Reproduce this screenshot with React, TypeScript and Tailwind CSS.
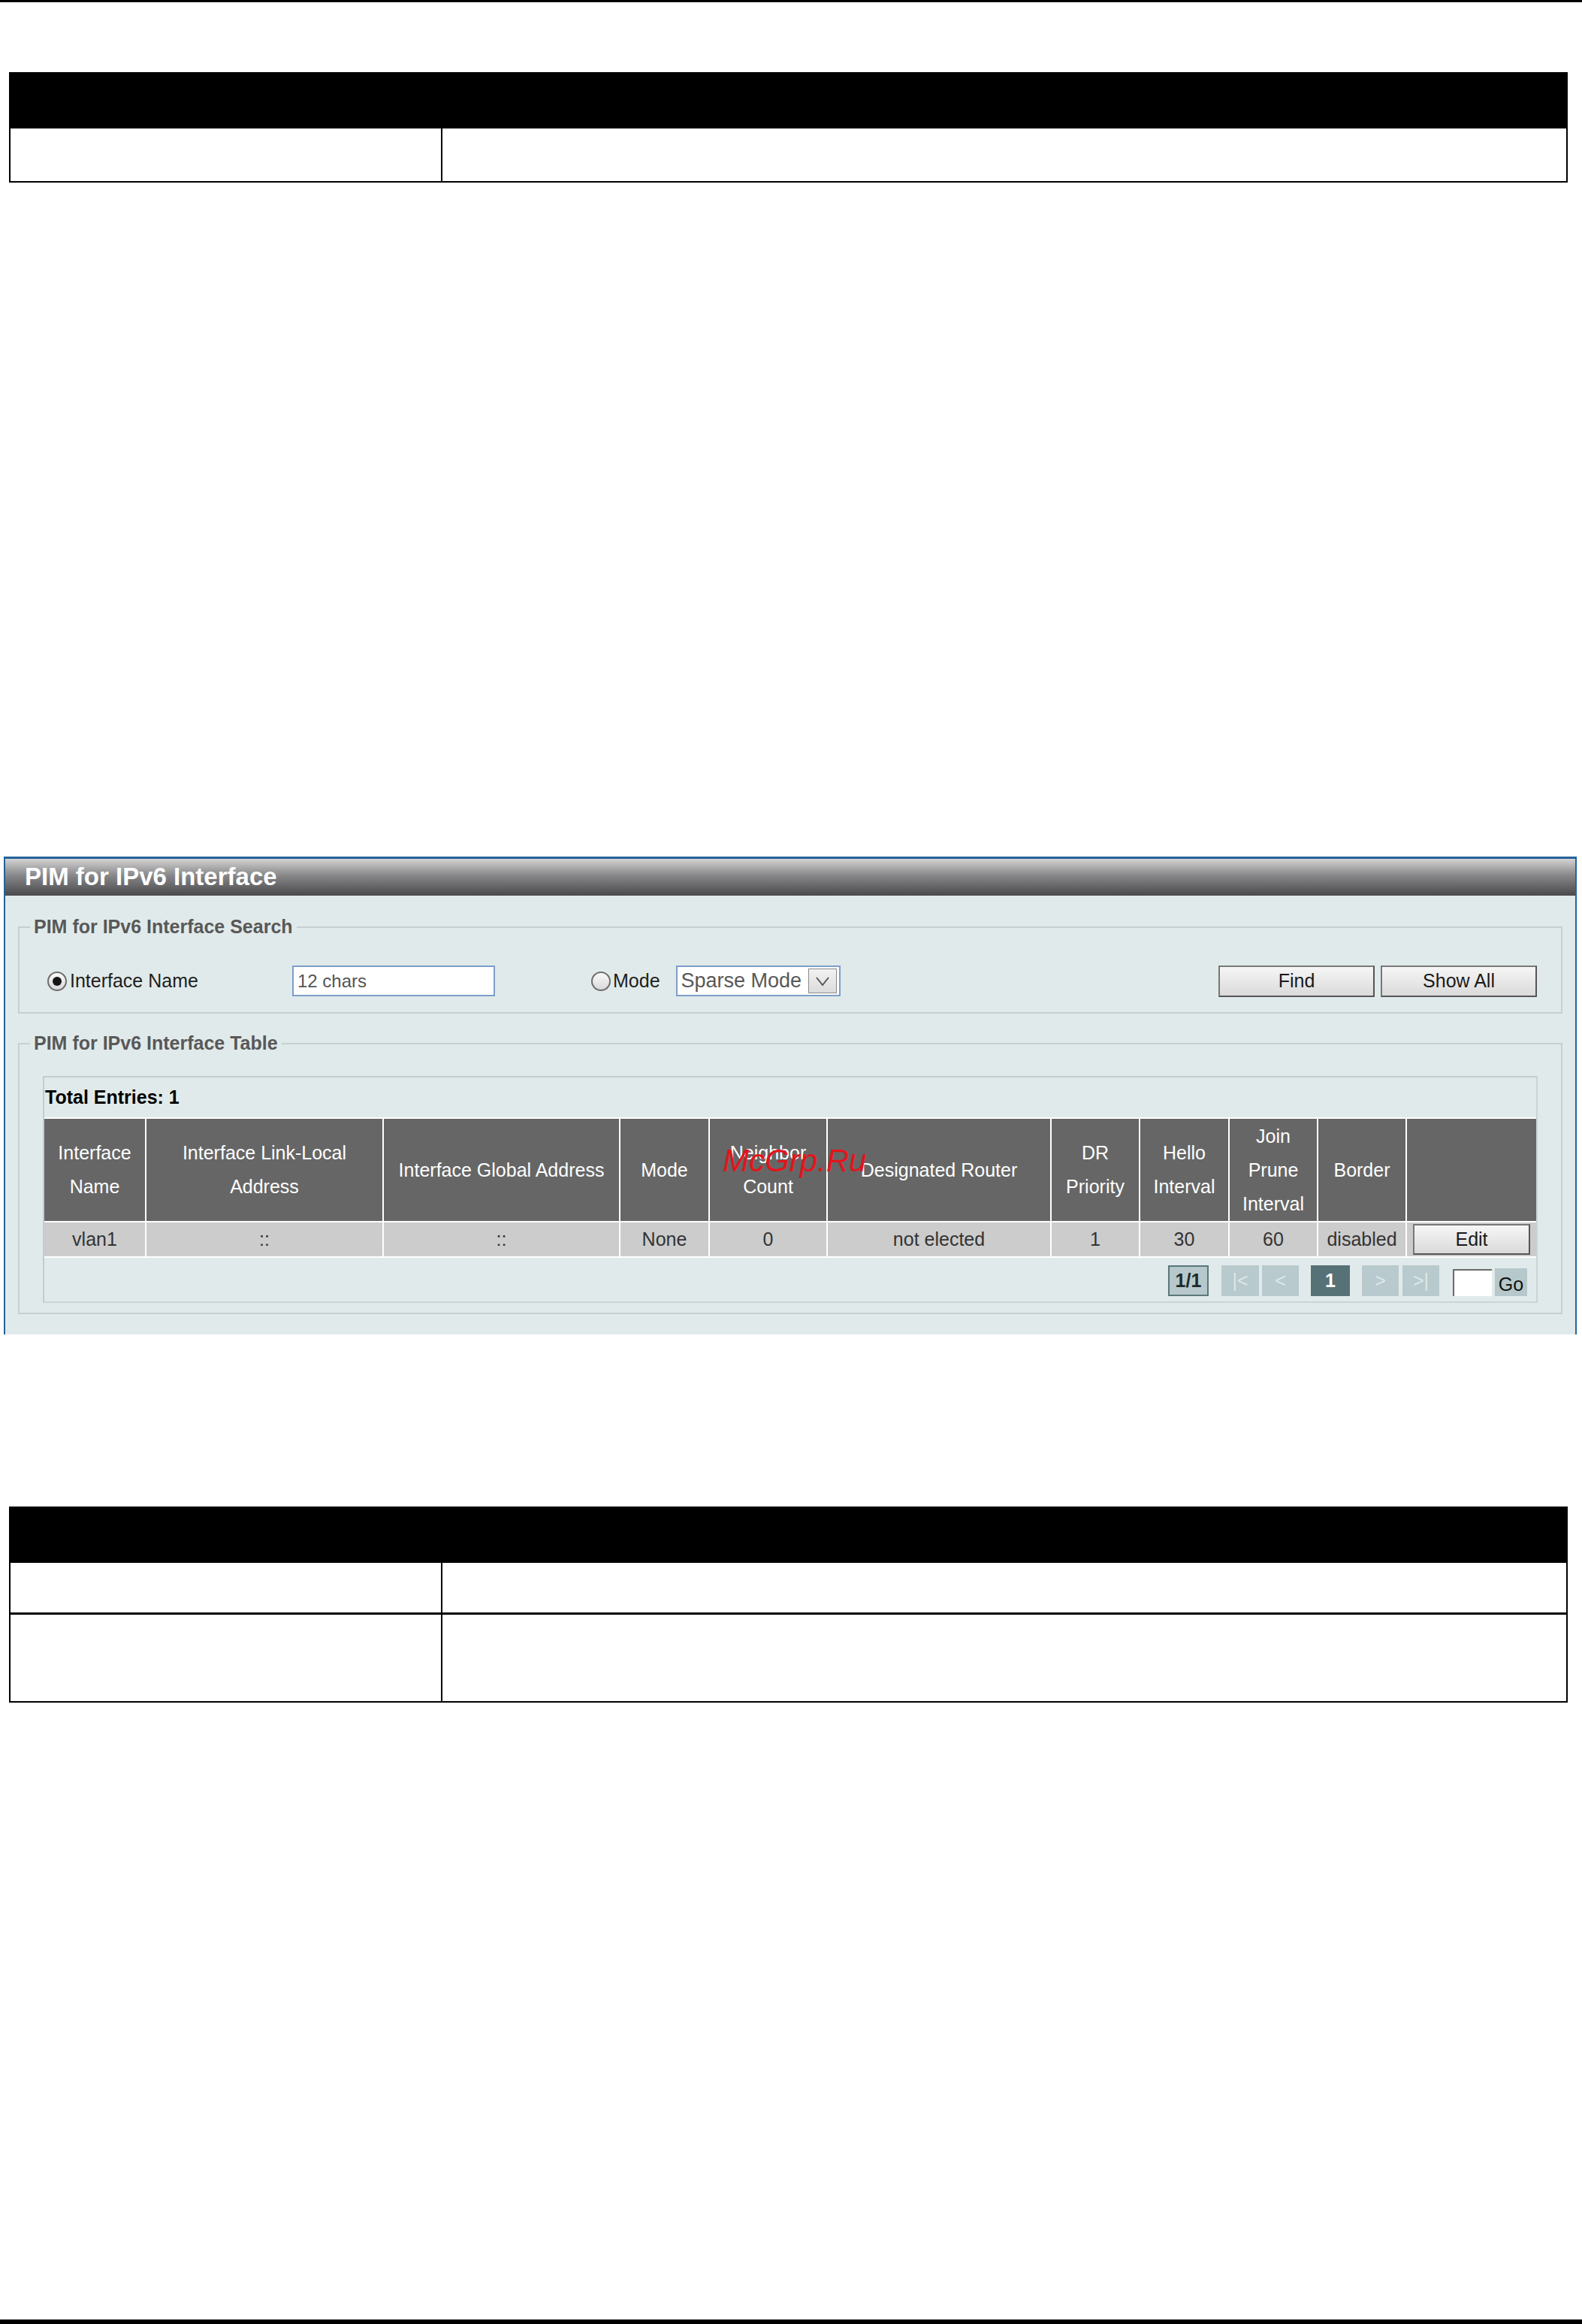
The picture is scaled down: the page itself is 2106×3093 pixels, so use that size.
const font = "font-['Liberation_Sans',Arial,sans-serif]";

function Radio({ checked }: { checked?: boolean }) {
  return (
    <span className="flex h-[26px] w-[26px] shrink-0 items-center justify-center rounded-full border-2 border-[#6e6e6e] bg-linear-to-b from-[#fafafa] to-[#d9d9d9]">
      {checked && <span className="h-[12px] w-[12px] rounded-full bg-[#151515]" />}
    </span>
  );
}

function Button({ label, className }: { label: string; className: string }) {
  return (
    <div
      className={`flex items-center justify-center border-2 border-[#777] border-b-[#555] border-r-[#555] bg-linear-to-b from-[#f6f6f6] to-[#dadada] text-[25px] leading-none text-[#1a1a1a] ${className}`}
    >
      {label}
    </div>
  );
}

const headers: string[][] = [
  ["Interface", "Name"],
  ["Interface Link-Local", "Address"],
  ["Interface Global Address"],
  ["Mode"],
  ["Neighbor", "Count"],
  ["Designated Router"],
  ["DR", "Priority"],
  ["Hello", "Interval"],
  ["Join", "Prune", "Interval"],
  ["Border"],
  [],
];

const row = ["vlan1", "::", "::", "None", "0", "not elected", "1", "30", "60", "disabled"];

function DocTable({ rows }: { rows: number[] }) {
  return (
    <div className="mx-[12px] w-[2075px] border-2 border-black">
      <div className="h-[73px] bg-black" />
      {rows.map((h, i) => (
        <div
          key={i}
          className={`grid grid-cols-[575px_1fr] ${i < rows.length - 1 ? "border-b-[3px] border-black" : ""}`}
          style={{ height: h }}
        >
          <div className="border-r-2 border-black" />
          <div />
        </div>
      ))}
    </div>
  );
}

function PageBox({
  children,
  className,
}: {
  children: React.ReactNode;
  className: string;
}) {
  return (
    <div className={`flex h-[41px] items-center justify-center text-[25px] leading-none ${className}`}>
      {children}
    </div>
  );
}

export default function App() {
  return (
    <div className={`flex h-[3093px] w-[2106px] flex-col bg-white ${font}`}>
      <div className="h-[3px] bg-black" />

      <div className="mt-[93px]">
        <DocTable rows={[70]} />
      </div>

      {/* PIM for IPv6 Interface panel */}
      <div className="relative ml-[5px] mt-[897px] flex h-[636px] w-[2094px] flex-col overflow-hidden border-x-2 border-t-[3px] border-[#25629a] bg-[#e1eaea]">
        <div className="flex h-[49px] items-center bg-linear-to-b from-[#d4d4d4] via-[#88888a] via-45% to-[#4a4a4c] pb-[2px] pl-[26px] text-[33px] font-bold leading-none text-white">
          PIM for IPv6 Interface
        </div>

        <fieldset className="mx-[17px] mt-[27px] border-2 border-[#c3d1d2]">
          <legend className="ml-[14px] px-[5px] text-[25px] font-bold leading-[29px] text-[#585858]">
            PIM for IPv6 Interface Search
          </legend>
          <div className="mb-[21px] mt-[37px] flex h-[41px] items-center pl-[37px] pr-[32px] text-[25px] text-[#1e1e1e]">
            <div className="flex w-[326px] items-center gap-[4px]">
              <Radio checked />
              <span>Interface Name</span>
            </div>
            <div className="flex h-[41px] w-[270px] items-center border-2 border-[#7d9fc9] bg-white pl-[5px] text-[24px] text-[#555]">
              12 chars
            </div>
            <div className="ml-[128px] flex items-center gap-[3px]">
              <Radio />
              <span>Mode</span>
            </div>
            <div className="ml-[21px] flex h-[41px] w-[219px] items-center justify-between border-2 border-[#7d9fc9] bg-white pl-[5px] pr-[3px] text-[27px] text-[#585858]">
              <span>Sparse Mode</span>
              <span className="flex h-[33px] w-[38px] items-center justify-center border border-[#8a8a8a] bg-linear-to-b from-[#f2f2f2] to-[#dcdcdc]">
                <svg width="22" height="16" viewBox="0 0 22 16">
                  <polyline points="3,3 11,13 19,3" fill="none" stroke="#555" strokeWidth="2" />
                </svg>
              </span>
            </div>
            <div className="ml-auto flex gap-[8px]">
              <Button label="Find" className="h-[42px] w-[208px]" />
              <Button label="Show All" className="h-[42px] w-[208px]" />
            </div>
          </div>
        </fieldset>

        <fieldset className="mx-[17px] mt-[25px] border-2 border-[#c3d1d2] pb-[13px]">
          <legend className="ml-[14px] px-[5px] text-[25px] font-bold leading-[29px] text-[#585858]">
            PIM for IPv6 Interface Table
          </legend>
          <div className="mx-[31px] mt-[29px] w-[1990px] border-2 border-[#cad4d4] border-l-[#c2cccc] border-t-[#c2cccc]">
            <div className="h-[53px] pl-[1px] pt-[12px] text-[25px] font-bold leading-[29px] text-black">
              Total Entries: 1
            </div>

            <div className="grid grid-cols-[134px_314px_313px_117px_155px_296px_116px_117px_116px_116px_172px] gap-[2px] border-y-2 border-white bg-white text-[25px]">
              {headers.map((lines, i) => (
                <div
                  key={`h${i}`}
                  className="flex h-[136px] flex-col items-center justify-center bg-[#666] leading-[45px] text-white"
                >
                  {lines.map((l) => (
                    <span key={l} className="whitespace-nowrap">
                      {l}
                    </span>
                  ))}
                </div>
              ))}
              {row.map((v, i) => (
                <div
                  key={`d${i}`}
                  className="flex h-[45px] items-center justify-center bg-[#cccccc] leading-none text-[#333]"
                >
                  {v}
                </div>
              ))}
              <div className="flex h-[45px] items-center justify-center bg-[#cccccc]">
                <Button label="Edit" className="h-[41px] w-[156px]" />
              </div>
            </div>

            <div className="flex h-[58px] items-start justify-end pr-[12px] pt-[10px]">
              <PageBox className="w-[54px] border-2 border-[#5b777b] bg-[#b6c8cb] font-bold text-[#1d2a2c]">
                1/1
              </PageBox>
              <PageBox className="ml-[17px] w-[50px] bg-[#b8cacd] text-[#dfe8e9]">|&lt;</PageBox>
              <PageBox className="ml-[4px] w-[49px] bg-[#b8cacd] text-[#dfe8e9]">&lt;</PageBox>
              <PageBox className="ml-[16px] w-[52px] bg-[#577277] font-bold text-white">1</PageBox>
              <PageBox className="ml-[16px] w-[49px] bg-[#b8cacd] text-[#dfe8e9]">&gt;</PageBox>
              <PageBox className="ml-[5px] w-[49px] bg-[#b8cacd] text-[#dfe8e9]">&gt;|</PageBox>
              <div className="ml-[18px] mt-[5px] h-[36px] w-[52px] border-l-2 border-t-2 border-[#6a6a6a] bg-white" />
              <div className="ml-[4px] mt-[4px] flex h-[37px] w-[43px] items-end justify-center bg-[#b6c8cb] pb-[3px] text-[25px] leading-none text-[#111]">
                Go
              </div>
            </div>
          </div>
        </fieldset>

        {/* watermark lying over the table header */}
        <span className="absolute left-[955px] top-[381px] text-[42px] italic leading-none text-[#e3141b]">
          McGrp.Ru
        </span>
      </div>

      <div className="mt-[229px]">
        <DocTable rows={[69, 115]} />
      </div>

      <div className="mt-auto h-[6px] bg-black" />
    </div>
  );
}
